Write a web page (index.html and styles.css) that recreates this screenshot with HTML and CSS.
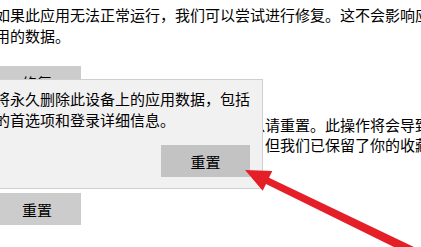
FILE: index.html
```html
<!DOCTYPE html>
<html lang="zh-CN">
<head>
    <meta charset="UTF-8">
    <meta name="viewport" content="width=device-width, initial-scale=1.0">
    <title>应用重置</title>
    <link rel="stylesheet" href="styles.css">
</head>
<body>
    <div class="page">
        <!-- Repair section -->
        <p class="desc">如果此应用无法正常运行，我们可以尝试进行修复。这不会影响应<br>用的数据。</p>
        <button class="btn" type="button">修复</button>

        <!-- Reset section -->
        <p class="desc reset-text">如果此应用仍无法正常运行，那么你可以请重置。此操作将会导致此应用的数据被删除<br>此应用的数据会被删除，包括登录信息，但我们已保留了你的收藏夹和文档。</p>
        <button class="btn btn-reset" type="button">重置</button>
    </div>

    <!-- Confirm flyout -->
    <div class="flyout">
        <p class="flyout-text">将永久删除此设备上的应用数据，包括<br>的首选项和登录详细信息。</p>
        <div class="flyout-actions">
            <button class="btn btn-confirm" type="button">重置</button>
        </div>
    </div>

    <!-- Red annotation arrow -->
    <svg class="arrow" width="421" height="247" viewBox="0 0 421 247">
        <polygon points="245,170 272.3,171.1 269,177.7 431.5,255.4 427.5,263.5 266,184.1 262.7,190.8" fill="#e51f27"/>
    </svg>
</body>
</html>
```

FILE: styles.css
```css
/* General Styles */
body {
    margin: 0;
    background-color: #fff;
    color: #000;
    font-family: "Noto Sans CJK SC", "Noto Sans", sans-serif;
    font-size: 15px;
    overflow: hidden;
    position: relative;
    width: 421px;
    height: 247px;
}

.page {
    margin-left: -7px;
    padding-top: 4px;
}

.desc {
    margin: 0;
    padding-left: 2px;
    line-height: 21px;
    white-space: nowrap;
}

.btn {
    display: block;
    width: 88px;
    height: 32px;
    margin-top: 20px;
    padding: 0;
    border: none;
    background-color: #cccccc;
    color: #000;
    font-family: inherit;
    font-size: 15px;
}

.reset-text {
    margin-top: 17px;
    line-height: 20px;
}

.btn-reset {
    margin-top: 38px;
}

/* Flyout */
.flyout {
    position: absolute;
    top: 79px;
    left: -20px;
    width: 283px;
    box-sizing: border-box;
    padding: 8px 12px 11px 14px;
    background-color: #f2f1f2;
    border: 1px solid #cfcfcf;
}

.flyout-text {
    margin: 0;
    line-height: 21px;
    white-space: nowrap;
}

.flyout-actions {
    display: flex;
    justify-content: flex-end;
    margin-top: 15px;
}

.btn-confirm {
    width: 89px;
    margin-top: 0;
    background-color: #c4c3c4;
}

.arrow {
    position: absolute;
    top: 0;
    left: 0;
}
```
